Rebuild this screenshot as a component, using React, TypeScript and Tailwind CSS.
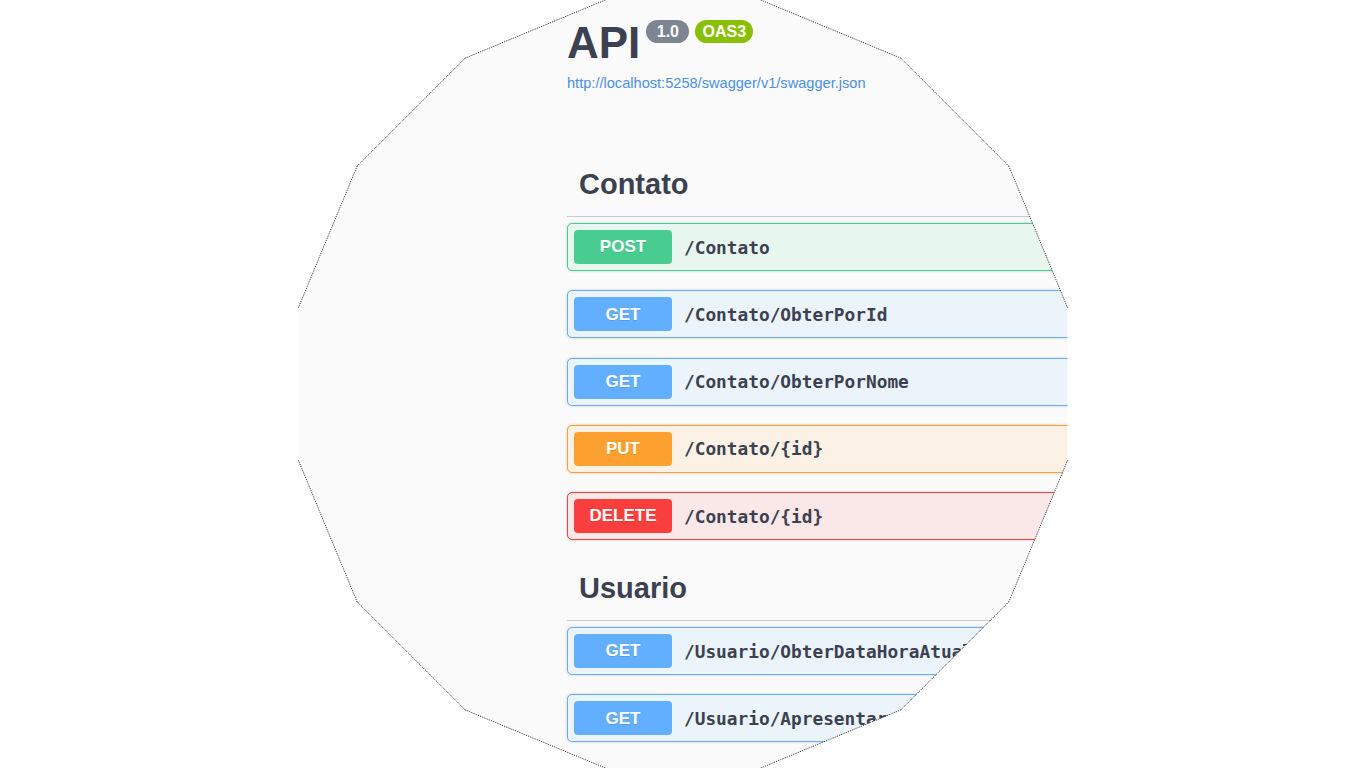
type Method = "GET" | "POST" | "PUT" | "DELETE";

const methodStyles: Record<Method, { row: string; badge: string }> = {
  POST: { row: "border-[#49cc90] bg-[#e7f6ef]", badge: "bg-[#49cc90]" },
  GET: { row: "border-[#61affe] bg-[#ebf3fb]", badge: "bg-[#61affe]" },
  PUT: { row: "border-[#fca130] bg-[#fbf1e5]", badge: "bg-[#fca130]" },
  DELETE: { row: "border-[#f93e3e] bg-[#fae7e7]", badge: "bg-[#f93e3e]" },
};

const sections: { tag: string; ops: { method: Method; path: string }[] }[] = [
  {
    tag: "Contato",
    ops: [
      { method: "POST", path: "/Contato" },
      { method: "GET", path: "/Contato/ObterPorId" },
      { method: "GET", path: "/Contato/ObterPorNome" },
      { method: "PUT", path: "/Contato/{id}" },
      { method: "DELETE", path: "/Contato/{id}" },
    ],
  },
  {
    tag: "Usuario",
    ops: [
      { method: "GET", path: "/Usuario/ObterDataHoraAtual" },
      { method: "GET", path: "/Usuario/Apresentar" },
    ],
  },
];

function Operation({ method, path }: { method: Method; path: string }) {
  const s = methodStyles[method];
  return (
    <div
      className={`flex h-[48px] items-center rounded-[5px] border px-[6px] shadow-[0_0_3px_rgba(0,0,0,0.19)] ${s.row}`}
    >
      <span
        className={`flex h-[34px] w-[98px] shrink-0 items-center justify-center rounded-[4px] text-[17px] font-bold text-white [text-shadow:0_1px_0_rgba(0,0,0,0.1)] ${s.badge}`}
      >
        {method}
      </span>
      <span className="ml-[12px] mt-[2px] whitespace-nowrap font-['DejaVu_Sans_Mono',monospace] text-[17.8px] font-bold text-[#3b4151]">
        {path}
      </span>
    </div>
  );
}

// 16-gon outline, only the slanted edges show a dotted line
const edges = [
  "1008.9,166.2 1067.5,307.5",
  "900.8,58.1 1008.9,166.2",
  "759.5,-0.5 900.8,58.1",
  "606.5,-0.5 465.2,58.1",
  "465.2,58.1 357.1,166.2",
  "357.1,166.2 298.5,307.5",
  "298.5,460.5 357.1,601.8",
  "357.1,601.8 465.2,709.9",
  "465.2,709.9 606.5,768.5",
  "759.5,768.5 900.8,709.9",
  "900.8,709.9 1008.9,601.8",
  "1008.9,601.8 1067.5,460.5",
];

export default function App() {
  return (
    <div className="relative h-[768px] w-full overflow-hidden bg-white font-['Liberation_Sans',Arial,sans-serif]">
      <div className="h-full w-full bg-[#fafafa] pl-[567px] pt-[20px] [clip-path:polygon(1067.5px_307.5px,1008.9px_166.2px,900.8px_58.1px,759.5px_-0.5px,606.5px_-0.5px,465.2px_58.1px,357.1px_166.2px,298.5px_307.5px,298.5px_460.5px,357.1px_601.8px,465.2px_709.9px,606.5px_768.5px,759.5px_768.5px,900.8px_709.9px,1008.9px_601.8px,1067.5px_460.5px)]">
        <div className="w-[780px]">
          <div className="flex items-start">
            <h2 className="mt-[1px] text-[44px] font-bold leading-none text-[#3b4151]">API</h2>
            <span className="ml-[6px] flex h-[23px] w-[43px] items-center justify-center rounded-full bg-[#7d8492] text-[16px] font-bold text-white">
              1.0
            </span>
            <span className="ml-[6px] flex h-[23px] w-[58px] items-center justify-center rounded-full bg-[#89bf04] text-[16px] font-bold text-white">
              OAS3
            </span>
          </div>
          <a className="mt-[10px] block h-[17px] text-[14.6px] leading-[17px] text-[#4990e2]">
            http://localhost:5258/swagger/v1/swagger.json
          </a>

          {sections.map((sec, i) => (
            <div key={sec.tag} className={i === 0 ? "mt-[62px]" : "mt-[18px]"}>
              <h3 className="flex h-[63px] items-center border-b border-[#c9cacd] pl-[12px] text-[29px] font-bold text-[#3b4151]">
                {sec.tag}
              </h3>
              <div className="mt-[6px] flex flex-col gap-[19.25px]">
                {sec.ops.map((op, j) => (
                  <Operation key={j} method={op.method} path={op.path} />
                ))}
              </div>
            </div>
          ))}
        </div>
      </div>
      <svg className="pointer-events-none absolute inset-0" width="1366" height="768">
        {edges.map((pts, i) => (
          <polyline key={i} points={pts} fill="none" stroke="#333" strokeWidth="1" strokeDasharray="1 1" />
        ))}
      </svg>
    </div>
  );
}
